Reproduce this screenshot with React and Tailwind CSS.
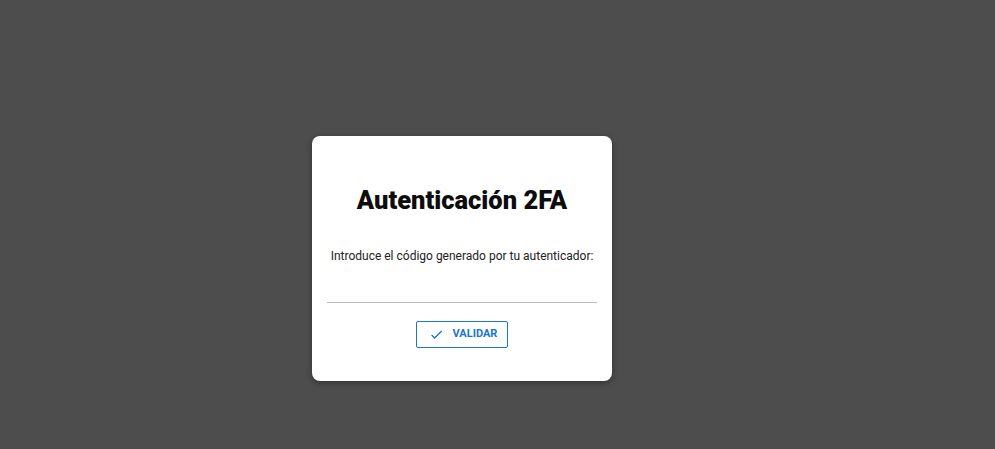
export default function App() {
  return (
    <div
      className="min-h-[449px] w-full bg-[#4d4d4d] pl-[312px] pt-[136px]"
      style={{ fontFamily: 'Roboto, "Liberation Sans", sans-serif' }}
    >
      <div className="flex h-[245px] w-[300px] flex-col items-center rounded-lg bg-white px-[15px] shadow-[0_2px_6px_rgba(0,0,0,0.35)]">
        <h1 className="mt-[48px] text-[25.5px] font-black leading-[32px] text-[#0d0d0d]">Autenticación 2FA</h1>
        <p className="mt-[32px] text-[12px] leading-[16px] text-[#222]">
          Introduce el código generado por tu autenticador:
        </p>
        <div className="mt-[23px] h-[16px] w-full border-b border-[#bdbdbd]" />
        <button className="mt-[18px] flex h-[27px] w-[92px] items-center justify-center gap-[9px] rounded-[2px] border border-[#1976d2] pl-[2px] text-[11px] font-bold uppercase text-[#1976d2]">
          <svg viewBox="0 0 24 24" width="15" height="15" fill="currentColor">
            <path d="M9 16.17 4.83 12l-1.42 1.41L9 19 21 7l-1.41-1.41z" />
          </svg>
          Validar
        </button>
      </div>
    </div>
  );
}
